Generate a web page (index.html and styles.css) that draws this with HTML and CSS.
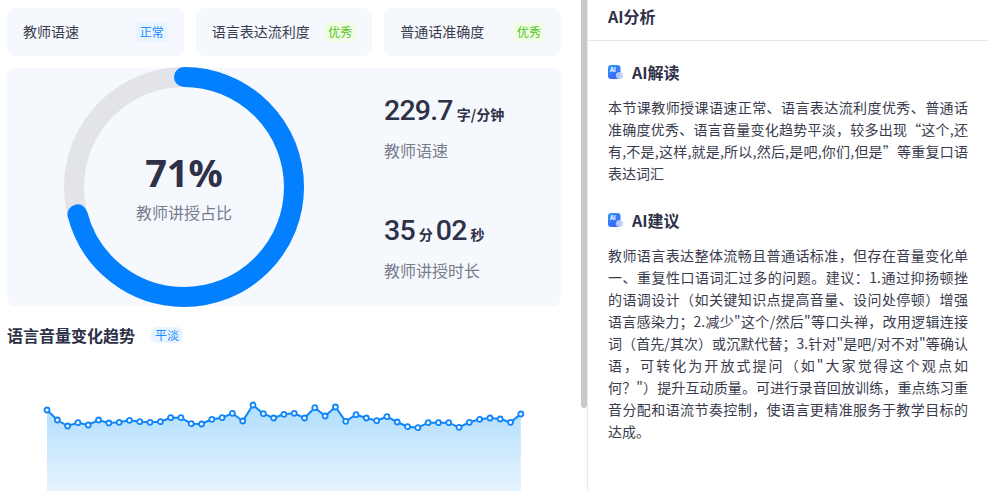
FILE: index.html
```html
<!DOCTYPE html>
<html lang="zh-CN">
<head>
<meta charset="utf-8">
<title>AI分析</title>
<link rel="stylesheet" href="styles.css">
</head>
<body>
<div class="page">
  <main class="left">
    <div class="tags">
      <div class="tag-card"><span class="tag-name">教师语速</span><span class="badge blue">正常</span></div>
      <div class="tag-card"><span class="tag-name">语言表达流利度</span><span class="badge green">优秀</span></div>
      <div class="tag-card"><span class="tag-name">普通话准确度</span><span class="badge green">优秀</span></div>
    </div>
    <section class="panel">
      <div class="donut">
        <svg class="ring" viewBox="0 0 240 240" width="240" height="240">
          <circle class="ring-bg" cx="120" cy="120" r="110"/>
          <circle class="ring-fg" cx="120" cy="120" r="110" pathLength="100" stroke-dasharray="71 100" transform="rotate(-90 120 120)"/>
        </svg>
        <div class="donut-text">
          <div class="pct">71%</div>
          <div class="pct-label">教师讲授占比</div>
        </div>
      </div>
      <div class="stats">
        <div class="stat">
          <div class="value"><b>229.7</b><i>字/分钟</i></div>
          <div class="stat-label">教师语速</div>
        </div>
        <div class="stat">
          <div class="value"><b>35</b><i>分</i><b>02</b><i>秒</i></div>
          <div class="stat-label">教师讲授时长</div>
        </div>
      </div>
    </section>
    <div class="trend-head">
      <h3>语言音量变化趋势</h3>
      <span class="badge blue small">平淡</span>
    </div>
    <svg class="chart" viewBox="7 350 554 141" width="554" height="141">
      <defs>
        <linearGradient id="area" x1="0" y1="0" x2="0" y2="1">
          <stop offset="0" stop-color="#b0defc"/>
          <stop offset="1" stop-color="#e6f4ff"/>
        </linearGradient>
        <marker id="dot" markerUnits="userSpaceOnUse" markerWidth="8" markerHeight="8" refX="4" refY="4">
          <circle cx="4" cy="4" r="2.5" fill="#fff" stroke="#0f85fb" stroke-width="1.8"/>
        </marker>
      </defs>
      <polygon class="area" points="47,491 47,410 57.3,420 67.6,426 77.9,422.7 88.2,425 98.5,420 108.8,423 119.1,422.3 129.4,420.3 139.7,421.7 150,422.3 160.3,421.7 170.6,417.7 180.9,417.7 191.2,423.7 201.5,424 211.8,419.3 222.1,417.7 232.4,413.3 242.7,421 253,405 263.3,413.7 273.6,418 283.9,414.3 294.2,413.3 304.5,418 314.8,407.7 325.1,416 335.4,407 345.7,421.3 356,414.7 366.3,418 376.6,420.7 386.9,416.7 397.2,422 407.5,426.7 417.8,427.7 428.1,422.7 438.4,422.7 448.7,422.7 459,427.3 469.3,422.3 479.6,419.3 489.9,418 500.2,419 510.5,422.3 520.8,414 520.8,491"/>
      <polyline class="line" points="47,410 57.3,420 67.6,426 77.9,422.7 88.2,425 98.5,420 108.8,423 119.1,422.3 129.4,420.3 139.7,421.7 150,422.3 160.3,421.7 170.6,417.7 180.9,417.7 191.2,423.7 201.5,424 211.8,419.3 222.1,417.7 232.4,413.3 242.7,421 253,405 263.3,413.7 273.6,418 283.9,414.3 294.2,413.3 304.5,418 314.8,407.7 325.1,416 335.4,407 345.7,421.3 356,414.7 366.3,418 376.6,420.7 386.9,416.7 397.2,422 407.5,426.7 417.8,427.7 428.1,422.7 438.4,422.7 448.7,422.7 459,427.3 469.3,422.3 479.6,419.3 489.9,418 500.2,419 510.5,422.3 520.8,414"/>
    </svg>
  </main>
  <div class="scrollbar"><div class="thumb"></div></div>
  <aside class="right">
    <header class="right-head">AI分析</header>
    <div class="right-body">
      <h4 class="ai-title">
        <svg class="ai-icon" viewBox="0 0 16 16" width="16" height="16"><defs><linearGradient id="ai1" x1="0" y1="0" x2="0.6" y2="1"><stop offset="0" stop-color="#2f9bff"/><stop offset="1" stop-color="#3c62f5"/></linearGradient></defs><rect x="0" y="1" width="12.5" height="14" rx="3" fill="url(#ai1)"/><circle cx="11.5" cy="11.5" r="3.6" fill="#bdd5fb" opacity=".9"/><text x="2" y="8.2" class="ai-mark">AI</text></svg>
        AI解读
      </h4>
      <p class="ai-text">本节课教师授课语速正常、语言表达流利度优秀、普通话准确度优秀、语言音量变化趋势平淡，较多出现“这个,还有,不是,这样,就是,所以,然后,是吧,你们,但是”等重复口语表达词汇</p>
      <h4 class="ai-title second">
        <svg class="ai-icon" viewBox="0 0 16 16" width="16" height="16"><rect x="0" y="1" width="12.5" height="14" rx="3" fill="url(#ai1)"/><circle cx="11.5" cy="11.5" r="3.6" fill="#bdd5fb" opacity=".9"/><text x="2" y="8.2" class="ai-mark">AI</text></svg>
        AI建议
      </h4>
      <p class="ai-text">教师语言表达整体流畅且普通话标准，但存在音量变化单一、重复性口语词汇过多的问题。建议：1.通过抑扬顿挫的语调设计（如关键知识点提高音量、设问处停顿）增强语言感染力；2.减少"这个/然后"等口头禅，改用逻辑连接词（首先/其次）或沉默代替；3.针对"是吧/对不对"等确认语，可转化为开放式提问（如"大家觉得这个观点如何？"）&#8288;提升互动质量。可进行录音回放训练，重点练习重音分配和语流节奏控制，使语言更精准服务于教学目标的达成。</p>
    </div>
  </aside>
</div>
</body>
</html>
```
FILE: styles.css
```css
* { box-sizing: border-box; }
html, body { margin: 0; height: 100%; overflow: hidden; background: #fff; }
body { font-family: "Noto Sans CJK SC", "Noto Sans", sans-serif; color: #2e3147; }
.page { display: flex; width: 988px; height: 491px; overflow: hidden; }
.left { width: 581px; flex: none; padding: 8px 20px 0 7px; overflow: hidden; }
.tags { display: flex; gap: 12px; }
.tag-card { flex: 1; height: 48px; background: #f5f8fd; border-radius: 8px; padding: 0 16px; display: flex; align-items: center; justify-content: space-between; font-size: 14px; line-height: 20px; color: #3a3c4e; }
.tag-name { margin-bottom: 2px; }
.badge { font-size: 12px; height: 20px; line-height: 20px; padding: 0 4px; border-radius: 6px; }
.badge.small { height: 16px; line-height: 16px; }
.badge.blue { background: #e8f4ff; color: #1e8bff; }
.badge.green { background: #f0fce6; color: #52c41a; }
.panel { margin-top: 12px; height: 238px; background: #f5f8fd; border-radius: 8px; display: flex; position: relative; }
.donut { position: relative; width: 240px; height: 240px; margin: -1px 0 0 57px; flex: none; }
.ring { display: block; overflow: visible; }
.ring-bg { fill: none; stroke: #e3e4e9; stroke-width: 20; }
.ring-fg { fill: none; stroke: #0280ff; stroke-width: 20; stroke-linecap: round; }
.donut-text { position: absolute; inset: 0; padding-bottom: 2px; display: flex; flex-direction: column; align-items: center; justify-content: center; }
.pct { font-family: "Noto Sans", sans-serif; font-size: 38px; font-weight: 700; line-height: 46px; color: #2e3147; }
.pct-label { margin-top: 6px; font-size: 16px; line-height: 22px; color: #797c8c; }
.stats { margin-left: 80px; padding-top: 24px; display: flex; flex-direction: column; gap: 50px; }
.value { display: flex; align-items: baseline; line-height: 38px; height: 38px; }
.value b { font-family: Roboto, sans-serif; font-size: 28.5px; font-weight: 500; letter-spacing: -.8px; }
.value i { font-style: normal; font-size: 14px; font-weight: 700; margin: 0 3px 0 4px; }
.stat-label { margin-top: 8px; font-size: 16px; line-height: 24px; color: #797c8c; }
.trend-head { display: flex; align-items: center; gap: 16px; margin-top: 18px; height: 22px; }
.trend-head h3 { margin: 0; font-size: 16px; font-weight: 700; color: #2e3147; }
.chart { display: block; margin-top: 4px; }
.area { fill: url(#area); }
.line { fill: none; stroke: #0f85fb; stroke-width: 2; marker: url(#dot); }
.scrollbar { width: 6px; flex: none; }
.thumb { height: 408px; background: #c9c9c9; border-radius: 0 0 3px 3px; }
.right { flex: 1; border-left: 1px solid #e6e8ec; min-width: 0; }
.right-head { height: 41px; border-bottom: 1px solid #e4e6ea; padding-left: 20px; font-size: 16px; font-weight: 700; line-height: 32px; color: #2e3147; }
.right-body { padding: 19px 20px 0; }
.ai-title { margin: 0; display: flex; align-items: center; gap: 8px; font-size: 16px; font-weight: 700; line-height: 24px; color: #2e3147; }
.ai-title.second { margin-top: 24px; }
.ai-icon { flex: none; }
.ai-mark { font-size: 6px; font-weight: 700; fill: #fff; }
.ai-text { margin: 12px 0 0; font-size: 14px; line-height: 22px; text-align: justify; color: #3a3c4e; }
```
